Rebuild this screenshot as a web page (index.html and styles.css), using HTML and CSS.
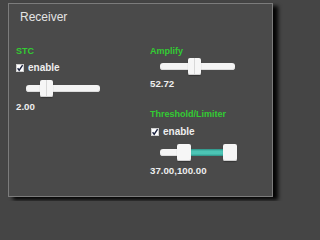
FILE: index.html
```html
<!DOCTYPE html>
<html>
<head>
<meta charset="utf-8">
<link rel="stylesheet" href="styles.css">
</head>
<body>
<div class="panel">
  <div class="title">Receiver</div>
  <div class="grid">
    <div class="col">
      <div class="label">STC</div>
      <div class="check-row">
        <svg class="checkbox" width="8" height="8" viewBox="0 0 8 8"><rect x="0.5" y="0.5" width="7" height="7" fill="#fff" stroke="#cfcfcf"/><path d="M1.6 4.2 L3.2 6.2 L6.6 1.2" fill="none" stroke="#1c2340" stroke-width="1.4"/></svg>
        <span class="check-text">enable</span>
      </div>
      <div class="slider slider-stc">
        <div class="track"></div>
        <div class="thumb" style="left:14px"></div>
      </div>
      <div class="value">2.00</div>
    </div>
    <div class="col">
      <div class="label">Amplify</div>
      <div class="slider slider-amp">
        <div class="track"></div>
        <div class="thumb" style="left:28px"></div>
      </div>
      <div class="value">52.72</div>
      <div class="label label-gap">Threshold/Limiter</div>
      <div class="check-row">
        <svg class="checkbox" width="8" height="8" viewBox="0 0 8 8"><rect x="0.5" y="0.5" width="7" height="7" fill="#fff" stroke="#cfcfcf"/><path d="M1.6 4.2 L3.2 6.2 L6.6 1.2" fill="none" stroke="#1c2340" stroke-width="1.4"/></svg>
        <span class="check-text">enable</span>
      </div>
      <div class="slider slider-thr">
        <div class="track"></div>
        <div class="fill" style="left:30px;width:33px"></div>
        <div class="thumb" style="left:17px"></div>
        <div class="thumb" style="left:63px"></div>
      </div>
      <div class="value">37.00,100.00</div>
    </div>
  </div>
</div>
</body>
</html>
```

FILE: styles.css
```css
html, body {
  margin: 0;
  padding: 0;
  background: #454545;
  overflow: hidden;
}
body {
  width: 283px;
  height: 201px;
  font-family: "Liberation Sans", Arial, sans-serif;
}
.panel {
  box-sizing: border-box;
  margin: 3px 0 0 8px;
  width: 265px;
  height: 194px;
  background: #4a4a4a;
  border: 1px solid #7c7c7c;
  box-shadow: 5px 3px 4px rgba(0, 0, 0, 0.95);
}
.title {
  margin-top: 6px;
  padding-left: 11px;
  font-size: 12px;
  line-height: 14px;
  color: #e4e4e4;
}
.grid {
  display: grid;
  grid-template-columns: 134px 1fr;
  margin-top: 22px;
  padding-left: 7px;
}
.col {
  display: flex;
  flex-direction: column;
  align-items: flex-start;
}
.label {
  font-size: 9px;
  font-weight: bold;
  line-height: 11px;
  height: 11px;
  color: #33cc33;
}
.label-gap {
  margin-top: 19px;
}
.check-row {
  display: flex;
  align-items: center;
  height: 12px;
  margin-top: 5px;
  gap: 4px;
}
.col + .col .check-row {
  margin-top: 6px;
  margin-left: 1px;
}
.checkbox {
  display: block;
  flex: none;
}
.check-text {
  font-size: 10px;
  font-weight: bold;
  line-height: 12px;
  color: #eeeeee;
}
.slider {
  position: relative;
  height: 17px;
  margin-left: 10px;
}
.slider-stc {
  width: 74px;
  margin-top: 6px;
}
.slider-amp {
  width: 75px;
  margin-top: 1px;
}
.slider-thr {
  width: 77px;
  margin-top: 6px;
}
.track {
  margin-top: 5px;
  height: 7px;
  border-radius: 3px;
  background: #f4f4f4;
  box-shadow: inset 0 -1px 0 #dcdcdc;
}
.fill {
  position: absolute;
  top: 5px;
  height: 7px;
  box-sizing: border-box;
  background: linear-gradient(#2c8f84, #4cc5b5 30%, #4cc5b5 70%, #2c8f84);
}
.thumb {
  position: absolute;
  top: 0;
  width: 13px;
  height: 17px;
  box-sizing: border-box;
  border-radius: 2px;
  background: linear-gradient(90deg, #f6f6f6 0, #f6f6f6 6px, #d8d8d8 6px, #d8d8d8 7px, #f6f6f6 7px);
  box-shadow: inset 0 -1px 0 #d0d0d0, 0 1px 1px rgba(0, 0, 0, 0.3);
}
.slider-thr .thumb {
  width: 14px;
  background: #f6f6f6;
}
.value {
  margin-top: 4px;
  font-size: 9.7px;
  font-weight: bold;
  line-height: 12px;
  color: #eeeeee;
}
.slider-amp + .value {
  margin-top: 3px;
}
```
